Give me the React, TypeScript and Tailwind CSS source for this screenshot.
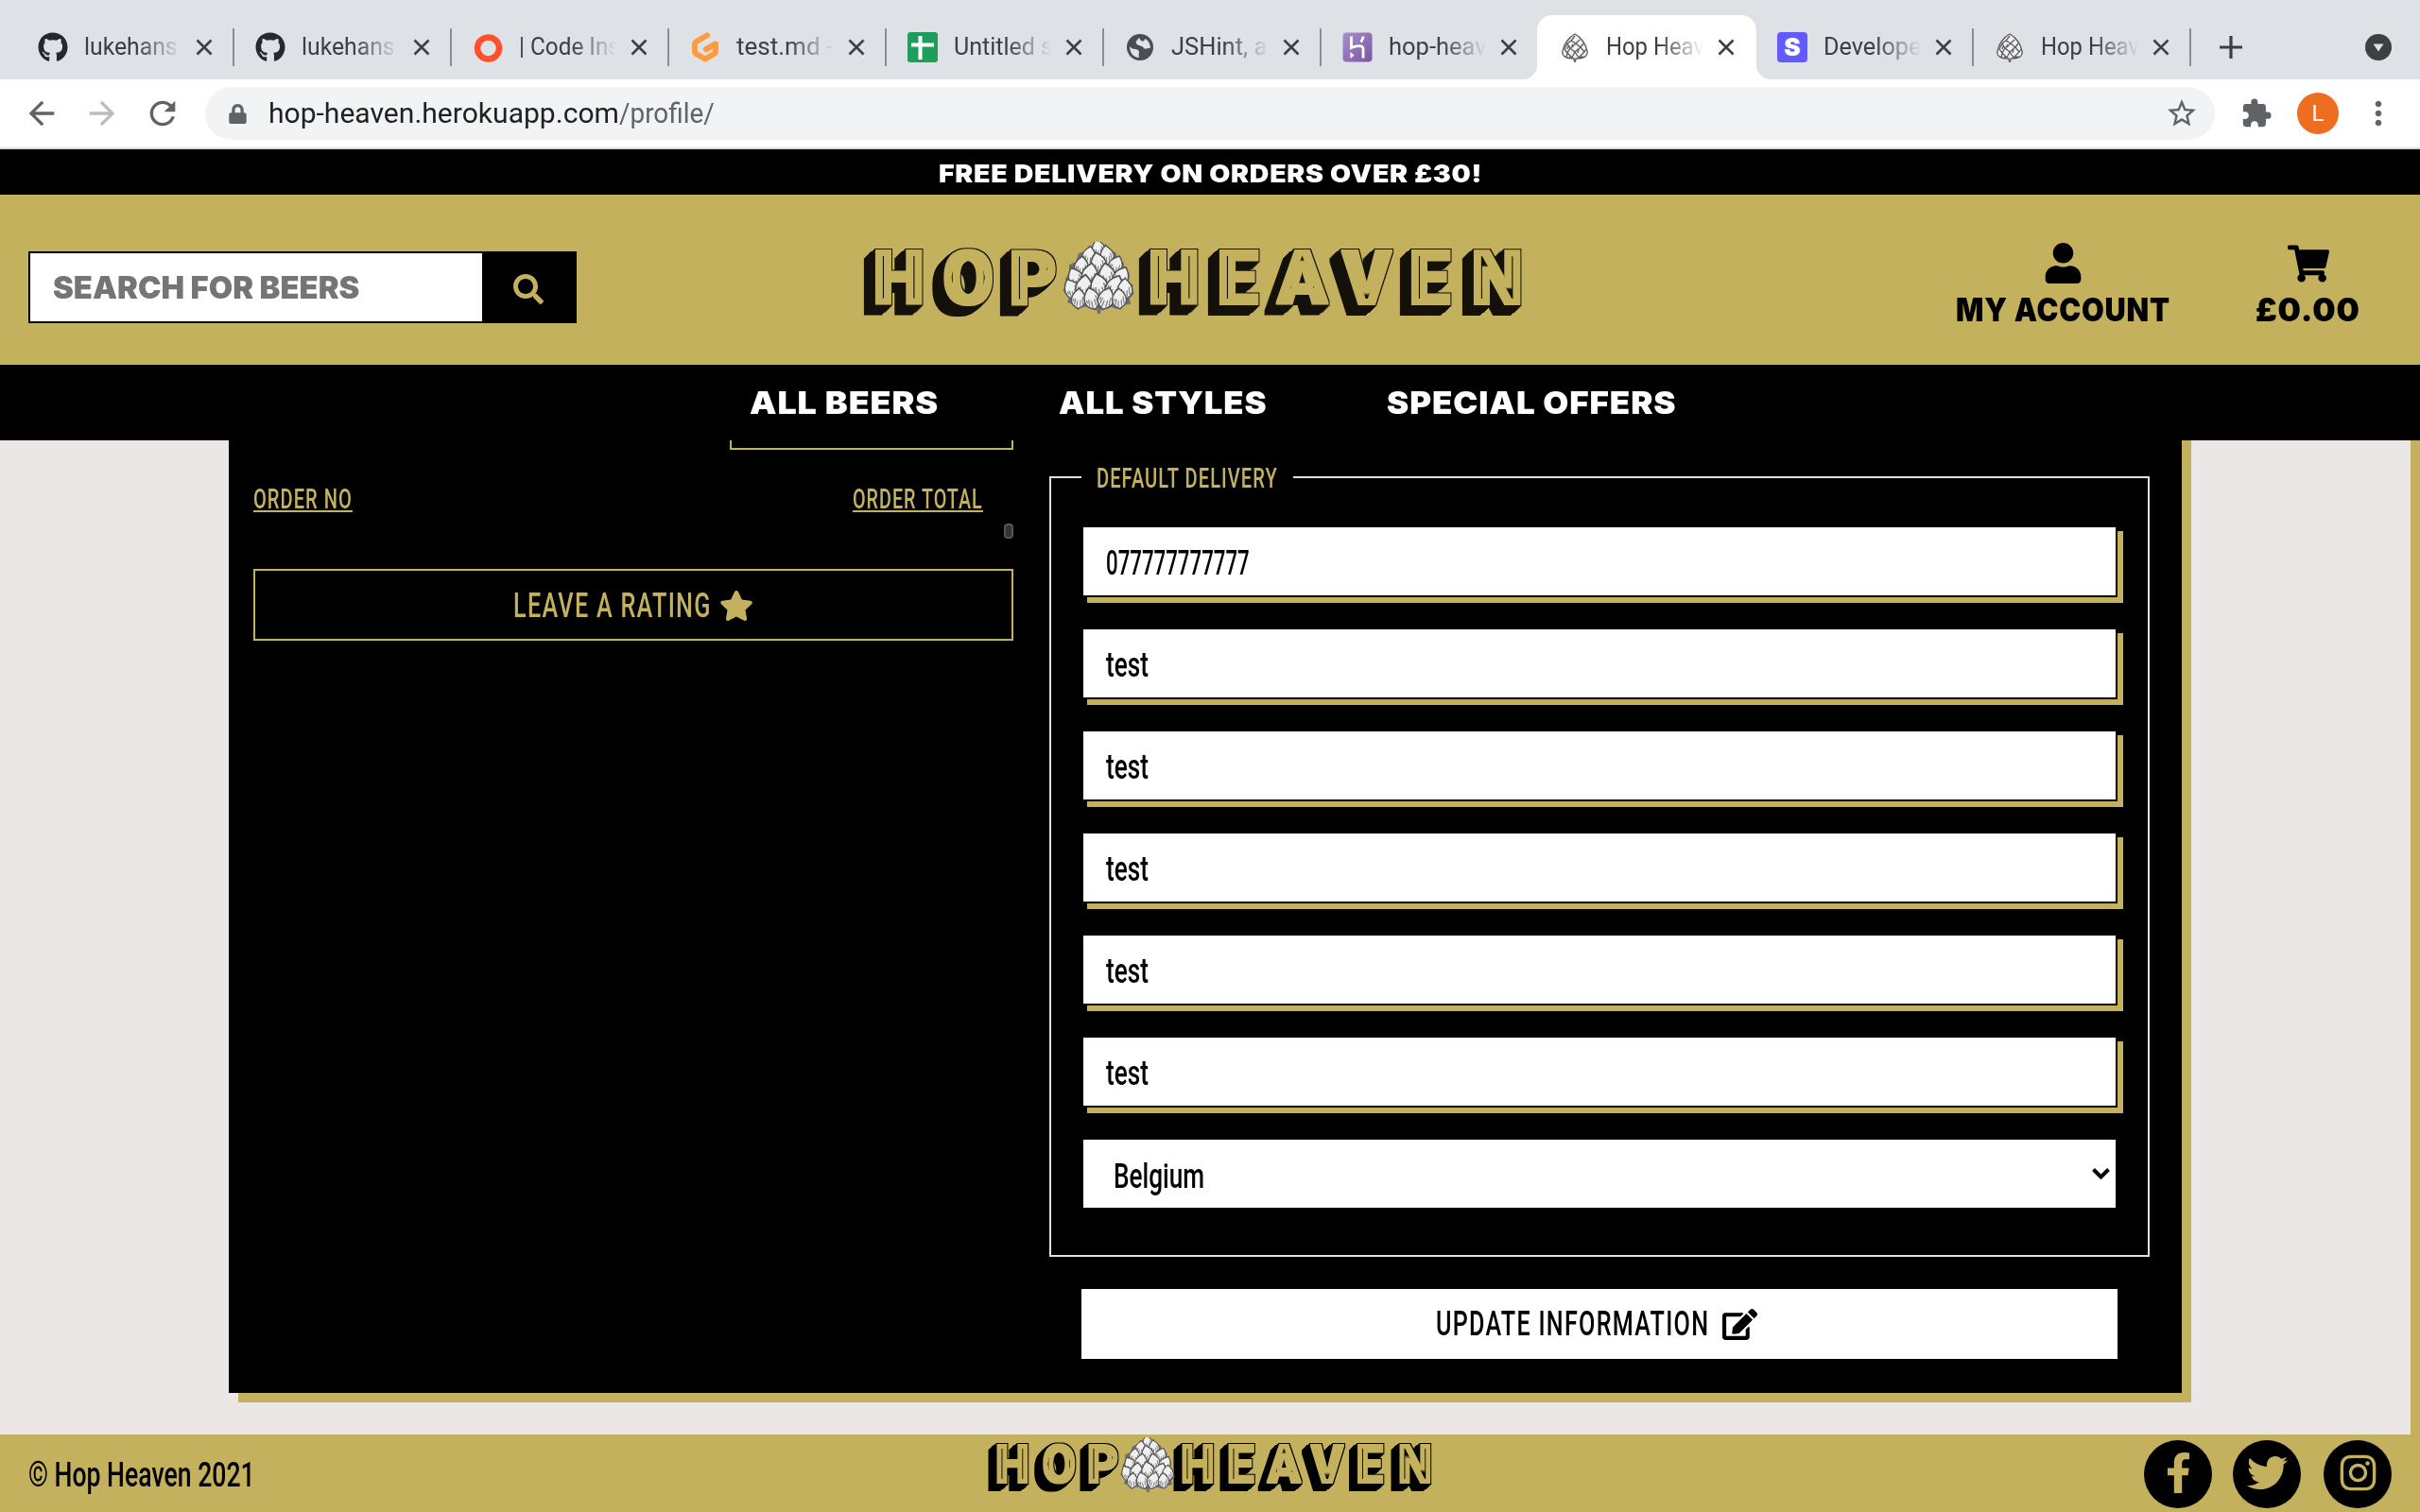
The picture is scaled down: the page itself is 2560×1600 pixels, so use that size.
import React, { useLayoutEffect, useRef, useState } from "react";
import {
  FaGithub,
  FaSearch,
  FaUser,
  FaShoppingCart,
  FaStar,
  FaEdit,
  FaFacebookF,
  FaTwitter,
  FaInstagram,
  FaLock,
} from "react-icons/fa";
import {
  MdStarBorder,
  MdExtension,
  MdMoreVert,
  MdArrowBack,
  MdArrowForward,
  MdRefresh,
} from "react-icons/md";

/** Single line of text condensed or widened horizontally to the given width. */
function Fit({ w, className = "", children }: { w: number; className?: string; children: React.ReactNode }) {
  const ref = useRef<HTMLSpanElement>(null);
  const [k, setK] = useState(1);
  useLayoutEffect(() => {
    if (ref.current) setK(w / ref.current.offsetWidth);
  }, [w]);
  return (
    <span className="inline-block shrink-0 text-left" style={{ width: w }}>
      <span
        ref={ref}
        className={"inline-block origin-left whitespace-nowrap leading-none " + className}
        style={{ transform: `scaleX(${k})` }}
      >
        {children}
      </span>
    </span>
  );
}

const DISPLAY = "font-['Inter'] font-black";
const BODY = "font-['Roboto'] font-medium";

/* ---------- hop cone ---------- */

const SCALES: [number, number, number][] = [
  [38, 15, 0.85],
  [28, 23, 0.9], [47, 22, 0.9],
  [20, 34, 0.95], [38, 31, 1.05], [56, 33, 0.95],
  [14, 46, 1], [29, 43, 1.1], [47, 43, 1.1], [62, 45, 1],
  [10, 58, 1], [23, 56, 1.15], [39, 55, 1.2], [55, 56, 1.15], [66, 58, 1],
  [17, 68, 0.95], [31, 68, 1.05], [46, 68, 1.05], [60, 68, 0.95],
];

function Hop({ className = "" }: { className?: string }) {
  return (
    <svg viewBox="0 0 76 76" preserveAspectRatio="none" className={className}>
      <path
        d="M38 0 L42 5 L46 2 L49 8 L56 11 L59 19 L65 22 L65 30 L71 33 L70 42 L75 46 L71 51 L76 54 L71 60 L72 66 L62 67 L58 71 L48 68 L41 70 L40 76 L37 76 L36 70 L28 68 L18 70 L13 67 L5 64 L7 58 L0 51 L6 46 L3 39 L7 33 L7 24 L14 21 L17 12 L24 10 L28 4 L33 5 Z"
        fill="#6f6f72"
      />
      {SCALES.map(([x, y, s], i) => (
        <g key={x + "-" + y} transform={`translate(${x} ${y - 8}) rotate(${(x - 38) * 0.5 + (i % 2 ? 14 : -14)}) scale(${s * 1.1} ${s * 1.15})`}>
          <path d="M0 -10 C4 -7 8 -2 7 3 C5 8 2 8 0 10 C-2 8 -6 8 -7 3 C-8 -2 -4 -7 0 -10Z" fill="#efefef" stroke="#505050" strokeWidth="1.3" />
          <path d="M-4 6 L-3 0 M-1.500 8 L-1 2 M2 7 L2 1 M4.500 5 L4 -2 M-5 3 L-5 0" stroke="#808080" strokeWidth="1.100" fill="none" />
        </g>
      ))}
    </svg>
  );
}

function HopIcon({ className = "" }: { className?: string }) {
  return (
    <svg viewBox="0 0 32 32" className={className} fill="none" stroke="#5b5b5b" strokeWidth="1.3">
      <path d="M16 2 C22 5 28 13 29 20 C30 25 26 28 17 28 L16.500 31 L15.500 31 L15 28 C6 28 2 25 3 20 C4 13 10 5 16 2Z" fill="#f2f2f2" />
      <path d="M16 4 L12 9 L17 12 L21 8 M12 9 L8 12 L11 17 L17 12 L22 16 L25 12 M8 12 L5 18 L8 22 L11 17 L16 21 L22 16 L26 21 L28 18 M8 22 L7 27 M8 22 L13 27 L16 21 L20 27 L26 21 M20 27 L25 26 M13 27 L10 26 M13 13 L14 16 M20 18 L19 22 M9 15 L8 18" />
    </svg>
  );
}

/* ---------- logo ---------- */

function Logo({ w, h, id, ink, hop }: { w: number; h: number; id: string; ink: string; hop: React.ReactNode }) {
  return (
    <div className="relative" style={{ width: w, height: h }}>
      <svg viewBox="0 0 694 76" preserveAspectRatio="none" className="absolute inset-0 size-full overflow-visible">
        <filter id={id} x="-20" y="-10" width="900" height="100" filterUnits="userSpaceOnUse" colorInterpolationFilters="sRGB">
          <feMorphology in="SourceAlpha" operator="dilate" radius="1.600 1" result="face" />
          <feMorphology in="face" operator="dilate" radius="1 1" result="edge" />
          <feOffset in="edge" dx="-1" dy="0.900" result="o1" />
          <feMerge result="m1"><feMergeNode in="edge" /><feMergeNode in="o1" /></feMerge>
          <feOffset in="m1" dx="-2" dy="1.800" result="o2" />
          <feMerge result="m2"><feMergeNode in="m1" /><feMergeNode in="o2" /></feMerge>
          <feOffset in="m2" dx="-4" dy="3.600" result="o3" />
          <feMerge result="m3"><feMergeNode in="m2" /><feMergeNode in="o3" /></feMerge>
          <feOffset in="m3" dx="-4" dy="3.300" result="o4" />
          <feMerge result="m4"><feMergeNode in="m3" /><feMergeNode in="o4" /></feMerge>
          <feFlood floodColor={ink} />
          <feComposite in2="m4" operator="in" result="block" />
          <feFlood floodColor="#c4b15d" />
          <feComposite in2="face" operator="in" result="front" />
          <feMorphology in="SourceAlpha" operator="erode" radius="6 6" result="core" />
          <feFlood floodColor={ink} />
          <feComposite in2="core" operator="in" result="line" />
          <feMerge>
            <feMergeNode in="block" />
            <feMergeNode in="front" />
            <feMergeNode in="line" />
          </feMerge>
        </filter>
        <g filter={`url(#${id})`} fontFamily="Roboto" fontWeight={900} fontSize="79" fill="#c4b15d">
          <g transform="translate(-0.500 66) scale(0.970 1)">
            <text x="9.500 85.700 158">HOP</text>
            <text x="309.500 384.700 450.500 521.600 594 662">HEAVEN</text>
          </g>
        </g>
      </svg>
      {hop}
    </div>
  );
}

/* ---------- browser chrome ---------- */

function Cross() {
  return (
    <svg viewBox="0 0 18 18" className="size-[18px] shrink-0" stroke="#3c4043" strokeWidth="2.600">
      <path d="M1.500 1.500 L16.500 16.500 M16.500 1.500 L1.500 16.500" />
    </svg>
  );
}

const CodeIcon = () => (
  <svg viewBox="0 0 32 32" className="size-8"><circle cx="16.500" cy="17" r="11.500" fill="none" stroke="#ff5029" strokeWidth="6.500" /></svg>
);
const GitpodIcon = () => (
  <svg viewBox="0 0 32 32" className="size-8" fill="none" stroke="#ff9a3d" strokeWidth="6" strokeLinejoin="round" strokeLinecap="round">
    <path d="M18 3.500 L6.500 10 Q5 11 5 13 L5 20 Q5 22 6.500 23 L16 28.500 L25.500 23 Q27 22 27 20 L27 12.500 L17 18" />
  </svg>
);
const SheetIcon = () => (
  <svg viewBox="0 0 32 32" className="size-8"><rect width="32" height="32" rx="3" fill="#1e9e5a" /><path d="M13.500 4 V29 M4 13.500 H28" stroke="#fff" strokeWidth="4" /></svg>
);
const HerokuIcon = () => (
  <svg viewBox="0 0 32 32" className="size-8">
    <defs><linearGradient id="hk" x1="0" y1="0" x2="1" y2="1"><stop offset="0" stopColor="#a98fd0" /><stop offset="1" stopColor="#7a559f" /></linearGradient></defs>
    <rect x="0.500" y="0.500" width="31" height="31" rx="4" fill="url(#hk)" />
    <path d="M9.500 4.500 V16.500 C14 14.500 22 13 22 17.500 V27.500 M22 4.500 C22 7 21 9 19.500 10.500" stroke="#fff" strokeWidth="2.800" fill="none" />
    <path d="M8.500 21 L12.500 24.500 L8.500 28Z" fill="#fff" />
  </svg>
);
const StripeIcon = () => (
  <span className="flex size-8 items-center justify-center rounded-[4px] bg-[#635bff] font-['Inter'] text-[26px] font-black leading-none text-white">S</span>
);

const GlobeIcon = () => (
  <svg viewBox="0 0 28 28" className="size-7">
    <circle cx="14" cy="14" r="14" fill="#4a4d51" />
    <path d="M3 13 C6 17 9 15 12 17 C14 19 12 21 13 25 C8 25 3 21 3 13Z M13 4 C11 7 9 7 10 10 C12 13 17 12 18 15 C20 17 23 14 25 15 C25 10 22 6 19 5 C19 8 16 8 15 7Z" fill="#dee1e6" />
  </svg>
);

const TABS: { icon: React.ReactNode; t: string; w: number; active?: boolean; line: boolean }[] = [
  { icon: <FaGithub className="size-8 text-[#24292f]" />, t: "lukehans", w: 99, line: true },
  { icon: <FaGithub className="size-8 text-[#24292f]" />, t: "lukehans", w: 99, line: true },
  { icon: <CodeIcon />, t: "| Code Ins", w: 107, line: true },
  { icon: <GitpodIcon />, t: "test.md -", w: 102, line: true },
  { icon: <SheetIcon />, t: "Untitled s", w: 105, line: true },
  { icon: <GlobeIcon />, t: "JSHint, a", w: 101, line: true },
  { icon: <HerokuIcon />, t: "hop-heav", w: 104, line: false },
  { icon: <HopIcon className="size-8" />, t: "Hop Heav", w: 104, active: true, line: false },
  { icon: <StripeIcon />, t: "Develope", w: 103, line: true },
  { icon: <HopIcon className="size-8" />, t: "Hop Heav", w: 104, line: true },
];

function Chrome() {
  return (
    <>
      <div className="flex h-[84px] bg-[#dee1e6] pl-[18px] font-['Roboto'] text-[25px] text-[#3c4043]">
        {TABS.map((tab, i) => (
          <div key={i} className="relative flex w-[230px] shrink-0 pt-4">
            {tab.active && (
              <div className="absolute -left-[2px] top-4 h-[68px] w-[232px] rounded-t-2xl bg-white">
                <span className="absolute -left-4 bottom-0 size-4 bg-[radial-gradient(circle_at_0_0,transparent_16px,#fff_16.500px)]" />
                <span className="absolute -right-4 bottom-0 size-4 bg-[radial-gradient(circle_at_100%_0,transparent_16px,#fff_16.500px)]" />
              </div>
            )}
            <div className="relative flex h-[68px] w-full items-center pl-[22px]">
              <span className="flex size-8 shrink-0 items-center justify-center">{tab.icon}</span>
              <span className="ml-[17px] w-[110px] shrink-0 [mask-image:linear-gradient(to_right,#000_50%,transparent_94%)]">
                <Fit w={tab.w} className="py-1">{tab.t}</Fit>
              </span>
              <span className="ml-[8px] flex"><Cross /></span>
              {tab.line && <span className="ml-auto h-10 w-0.5 bg-[#8b8e92]" />}
            </div>
          </div>
        ))}
        <div className="flex flex-1 items-center justify-between pl-[30px] pr-[30px] pt-4">
          <svg viewBox="0 0 24 24" className="size-6" stroke="#3c4043" strokeWidth="3.200"><path d="M12 0 V24 M0 12 H24" /></svg>
          <svg viewBox="0 0 28 28" className="size-7"><circle cx="14" cy="14" r="14" fill="#3c4043" /><path d="M8.500 10.500 H19.500 L14 18.500Z" fill="#dee1e6" /></svg>
        </div>
      </div>
      <div className="flex h-[74px] items-center border-b-2 border-[#d9d9d9] bg-white text-[#5f6368]">
        <MdArrowBack className="ml-6 size-10" />
        <MdArrowForward className="ml-6 size-10 text-[#bbbdc0]" />
        <MdRefresh className="ml-6 size-10" />
        <div className="ml-[25px] flex h-14 w-[2126px] items-center rounded-full bg-[#f1f3f4] pl-[25px] pr-[17px] font-['Roboto'] text-[29px]">
          <FaLock className="h-[21px] w-[19px]" />
          <div className="ml-[23px] mt-px flex text-[#202124]">
            <Fit w={371}>hop-heaven.herokuapp.com</Fit>
            <Fit w={101} className="text-[#5f6368]">/profile/</Fit>
          </div>
          <MdStarBorder className="ml-auto size-9" />
        </div>
        <MdExtension className="ml-[27px] size-[34px]" />
        <span className="ml-[26px] flex size-11 items-center justify-center rounded-full bg-[#ee6d20] font-['Roboto'] text-[24px] text-white">L</span>
        <MdMoreVert className="ml-[22px] size-10" />
      </div>
    </>
  );
}

/* ---------- site ---------- */

function Header() {
  return (
    <>
      <div className={"relative flex h-12 items-center justify-center bg-black pt-[6px] text-white " + DISPLAY}>
        <Fit w={575} className="text-[26px] tracking-wide">FREE DELIVERY ON ORDERS OVER £30!</Fit>
      </div>
      <div className="relative flex h-[180px] bg-[#c4b15d]">
        <div className="ml-[30px] mt-[60px] flex h-[76px] w-[580px] border-2 border-black bg-white">
          <div className={"flex w-[478px] items-center pl-[24px] pt-[2px] text-[33px] text-[#757575] " + DISPLAY}>
            <Fit w={324}>SEARCH FOR BEERS</Fit>
          </div>
          <div className="flex flex-1 items-center justify-center bg-black pt-[3px]">
            <FaSearch className="size-8 text-[#c4b15d]" />
          </div>
        </div>
        <div className="ml-[305px] mt-[50px]">
          <Logo w={694} h={76} id="logo-top" ink="#14110a" hop={<Hop className="absolute left-[209px] top-0 h-[76px] w-[76px]" />} />
        </div>
        <div className={"ml-auto mr-[63px] mt-[51px] flex gap-[90px] text-[34px] " + DISPLAY}>
          <div className="flex flex-col items-center">
            <FaUser className="size-[43px]" />
            <Fit w={227} className="mt-[11px] tracking-wide">MY ACCOUNT</Fit>
          </div>
          <div className="flex flex-col items-center">
            <FaShoppingCart className="size-[44px]" />
            <Fit w={111} className="mt-[10px] tracking-wide">£0.00</Fit>
          </div>
        </div>
      </div>
      <nav className={"relative z-10 flex h-20 items-center gap-[127px] bg-black pl-[793px] pt-[2px] text-[33px] text-white " + DISPLAY}>
        <Fit w={200} className="tracking-wide">ALL BEERS</Fit>
        <Fit w={220} className="tracking-wide">ALL STYLES</Fit>
        <Fit w={307} className="tracking-wide">SPECIAL OFFERS</Fit>
      </nav>
    </>
  );
}

const FIELDS: [string, number][] = [
  ["077777777777", 152], ["test", 45], ["test", 45], ["test", 45], ["test", 45], ["test", 45],
];

function Profile() {
  return (
    <main className="flex h-[1052px] border-r-[10px] border-[#c4b15d] bg-[#ebe7e6] pl-[242px]">
      <div className={"-mt-5 flex h-[1028px] w-[2066px] bg-black pl-[26px] pt-5 shadow-[10px_10px_0_#c4b15d] " + BODY}>
        <section className="flex w-[804px] flex-col text-[#c4b15d]">
          <div className="ml-auto h-[10px] w-[300px] border-2 border-t-0 border-[#c4b15d]" />
          <div className="mt-[38px] flex justify-between pr-[32px] text-[29.500px] leading-none">
            <span className="flex h-7 border-b-2 border-[#c4b15d]"><Fit w={105} className="tracking-wider">ORDER NO</Fit></span>
            <span className="flex h-7 border-b-2 border-[#c4b15d]"><Fit w={138} className="tracking-wider">ORDER TOTAL</Fit></span>
          </div>
          <div className="ml-auto mt-3 h-4 w-2.5 rounded-[4px] border-2 border-[#555] bg-[#333]" />
          <div className="mt-8 flex h-[76px] items-center border-2 border-[#c4b15d] pl-[273px] pt-[2px] text-[37px]">
            <Fit w={210} className="tracking-wider">LEAVE A RATING</Fit>
            <FaStar className="ml-[8px] size-[36px]" />
          </div>
        </section>
        <section className="ml-[38px] mt-[38px] w-[1164px]">
          <div className="h-[826px] border-2 border-[#dee2e6] pl-8 pr-8">
            <div className="-mt-5 flex h-10 w-[224px] items-center bg-black pl-4 text-[29.500px] text-[#c4b15d]">
              <Fit w={192} className="tracking-wider">DEFAULT DELIVERY</Fit>
            </div>
            <div className="mt-[30px] flex flex-col gap-8 text-[36px] text-black">
              {FIELDS.map(([v, w], i) => (
                <div key={i} className="flex h-[76px] items-center border-2 border-black bg-white pl-6 pt-[3px] shadow-[6px_6px_0_#c4b15d]">
                  <Fit w={w}>{v}</Fit>
                </div>
              ))}
              <div className="flex h-[76px] items-center justify-between border-2 border-black bg-white pl-8 pr-[6px]">
                <span className="flex pt-[5px]"><Fit w={96}>Belgium</Fit></span>
                <svg viewBox="0 0 19 12" className="h-3 w-[19px]" fill="none" stroke="#000" strokeWidth="4"><path d="M1.500 1.500 L9.500 9.500 L17.500 1.500" /></svg>
              </div>
            </div>
          </div>
          <div className="ml-[34px] mt-[34px] flex h-[74px] w-[1096px] items-center bg-white pl-[375px] text-[37px]">
            <Fit w={289} className="tracking-wider">UPDATE INFORMATION</Fit>
            <FaEdit className="ml-[14px] size-[37px]" />
          </div>
        </section>
      </div>
    </main>
  );
}

function Footer() {
  return (
    <footer className="flex h-[82px] bg-[#c4b15d]">
      <div className={"flex w-[1017px] items-center pl-[30px] pt-[5px] text-[36.500px] " + BODY}>
        <Fit w={240}>© Hop Heaven 2021</Fit>
      </div>
      <div className="ml-[30px] mt-[5px]">
        <Logo w={467} h={53} id="logo-foot" ink="#000" hop={<Hop className="absolute -top-[2px] left-[138px] h-[58px] w-[58px]" />} />
      </div>
      <div className="ml-auto mr-[30px] mt-1.5 flex text-[#c4b15d]">
        <span className="flex size-[72px] items-center justify-center rounded-full bg-black"><FaFacebookF className="-mt-1 size-[43px]" /></span>
        <span className="ml-[22px] flex size-[72px] items-center justify-center rounded-full bg-black"><FaTwitter className="-mt-1 size-[43px]" /></span>
        <span className="ml-6 flex size-[72px] items-center justify-center rounded-full bg-black"><FaInstagram className="-mt-1 size-[43px]" /></span>
      </div>
    </footer>
  );
}

export default function App() {
  return (
    <div className="flex h-[1600px] w-[2560px] flex-col overflow-hidden bg-white text-black">
      <Chrome />
      <Header />
      <Profile />
      <Footer />
    </div>
  );
}
